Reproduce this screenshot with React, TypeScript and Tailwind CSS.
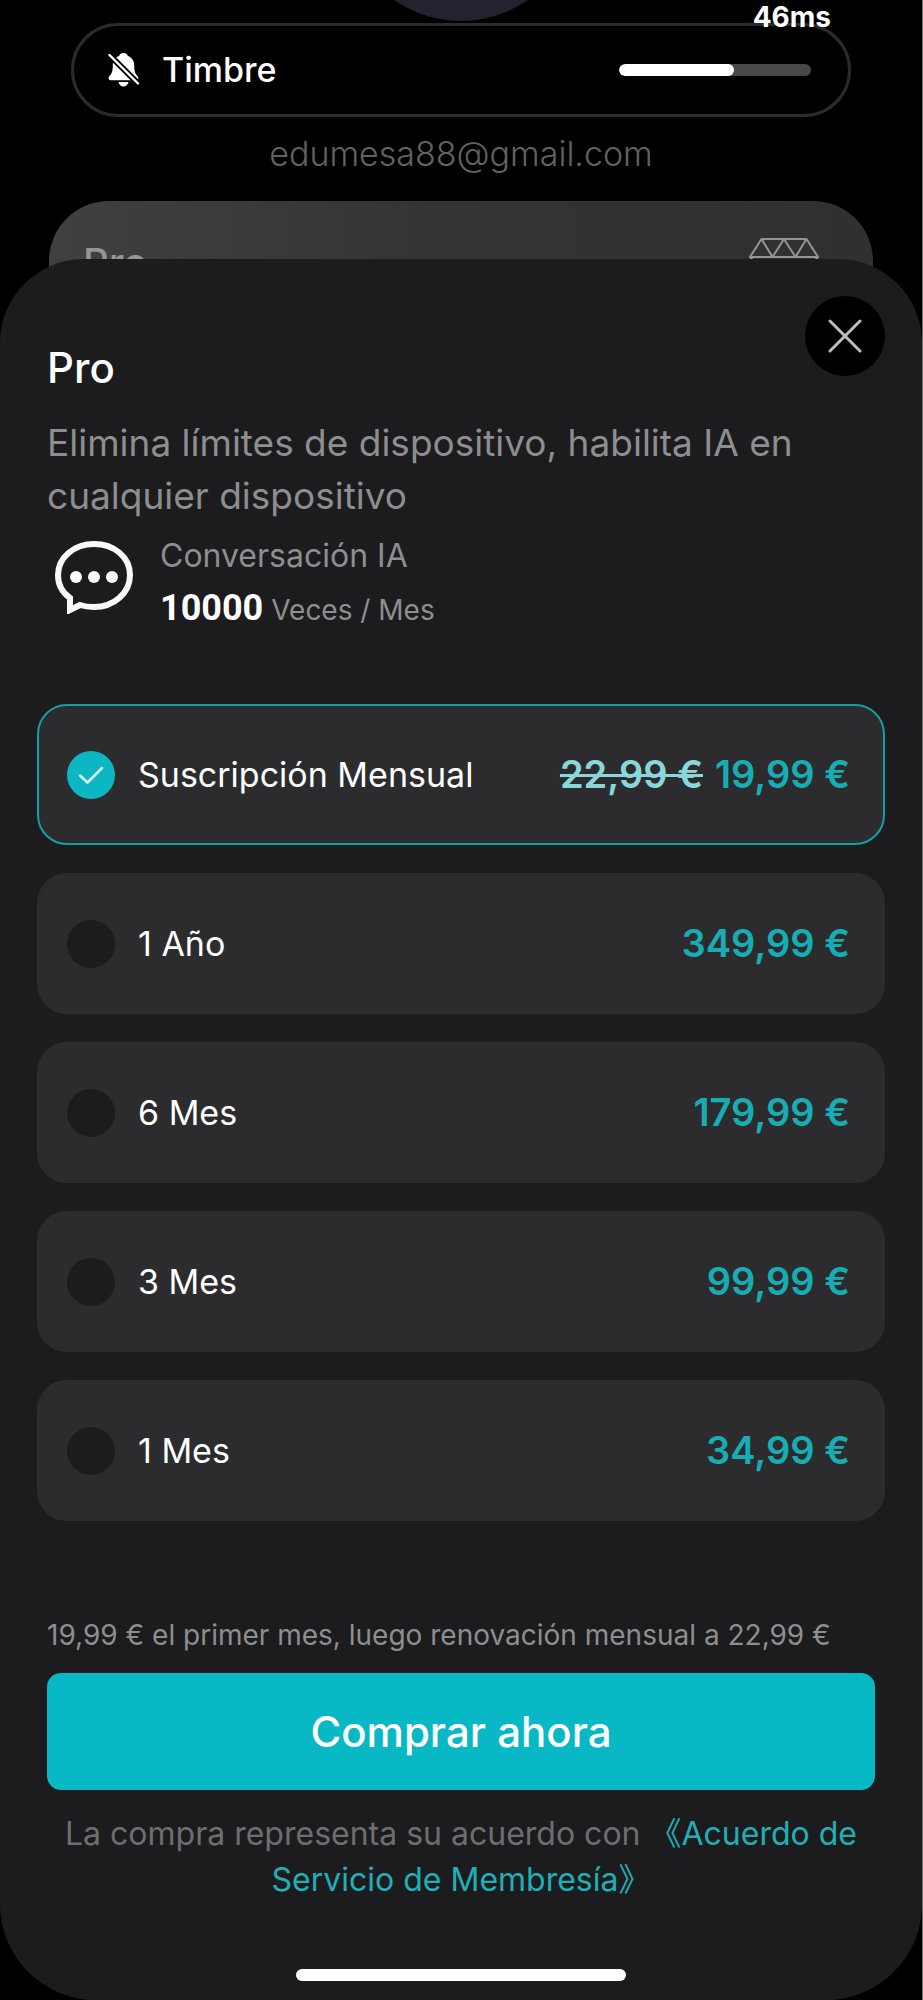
import { useState } from 'react'

const plans = [
  { id: 'subscription', name: 'Suscripción Mensual', oldPrice: '22,99 €', price: '19,99 €' },
  { id: 'year', name: '1 Año', price: '349,99 €' },
  { id: 'half-year', name: '6 Mes', price: '179,99 €' },
  { id: 'quarter', name: '3 Mes', price: '99,99 €' },
  { id: 'month', name: '1 Mes', price: '34,99 €' },
]

const BellOffIcon = () => (
  <svg width="32" height="36" viewBox="0 0 32 36" aria-hidden="true">
    <path
      d="M15.5 1c2.2 0 3.9 1.3 4.4 3.1 4 1.4 6.3 4.9 6.3 9.4 0 6.6 1.4 8.5 3.6 11 .9 1 .9 3.7-1.3 3.7H2.5c-2.2 0-2.2-2.7-1.3-3.7 2.2-2.5 3.6-4.4 3.6-11 0-4.5 2.3-8 6.3-9.4C11.6 2.3 13.3 1 15.5 1Z"
      fill="#fff"
    />
    <path d="M10.5 30h10c-.5 2.7-2.5 4.5-5 4.5s-4.5-1.8-5-4.5Z" fill="#fff" />
    <path d="M0 1.5 31 32.5" stroke="#000" strokeWidth="6" />
    <path d="M1.5 3 30 31.5" stroke="#fff" strokeWidth="2.4" strokeLinecap="round" />
  </svg>
)

const DiamondIcon = () => (
  <svg width="70" height="60" viewBox="0 0 70 60" fill="none" stroke="#949494" strokeWidth="2" strokeLinejoin="round" aria-hidden="true">
    <path d="M12.5 2h45L69 20 35 58 1 20Z" />
    <path d="M1 20h68M12.5 2 23.5 20 35 2l11.5 18L57.5 2" />
  </svg>
)

const ChatIcon = () => (
  <svg width="80" height="74" viewBox="0 0 80 74" aria-hidden="true">
    <path
      d="M40 4C20 4 4 17.5 4 35c0 10.5 5 18 12 23v12l10-5c4.500 1.500 9 2 14 2 20 0 36-14 36-32S60 4 40 4Z"
      fill="none"
      stroke="#f8f8f8"
      strokeWidth="6"
    />
    <circle cx="22" cy="37" r="6" fill="#f8f8f8" />
    <circle cx="40" cy="37" r="6" fill="#f8f8f8" />
    <circle cx="58" cy="37" r="6" fill="#f8f8f8" />
  </svg>
)

const RingerToast = () => (
  <div className="absolute inset-x-[71px] top-[23px] flex h-[94px] items-center rounded-full border-[3px] border-[#2b2b2b] bg-black pr-[37px] pl-[34px]">
    <BellOffIcon />
    <span className="ml-[22px] text-[34px] leading-[44px] font-medium text-white">Timbre</span>
    <progress
      value={60}
      max={100}
      aria-label="Timbre"
      className="ml-auto h-3 w-48 appearance-none overflow-hidden rounded-full [&::-webkit-progress-bar]:bg-[#484848] [&::-webkit-progress-value]:rounded-full [&::-webkit-progress-value]:bg-white"
    />
  </div>
)

const App = () => {
  const [selected, setSelected] = useState('subscription')

  return (
    <div className="flex min-h-screen flex-col overflow-hidden border-r border-[#6e6e6a] bg-black font-['Inter','Noto_Sans_CJK_SC',sans-serif]">
      {/* Profile behind the sheet */}
      <header className="relative px-[49px] pt-[132px]">
        <div className="absolute bottom-full left-1/2 size-[232px] -translate-x-1/2 translate-y-[21px] rounded-full bg-[#23232f]" />
        <RingerToast />
        <span className="absolute top-0 right-[91px] text-[28px] leading-[34px] font-bold text-white">46ms</span>
        <p className="text-center text-[34px] leading-[44px] font-light text-[#626262]">edumesa88@gmail.com</p>
        <div className="mt-[25px] flex h-[140px] items-start justify-between rounded-t-[60px] bg-linear-to-r from-[#404040] via-[#333333] to-[#303030] px-[34px] pt-[36px] pr-[54px]">
          <span className="text-[40px] leading-[52px] font-medium text-[#949494]">Pro</span>
          <DiamondIcon />
        </div>
      </header>

      {/* Purchase sheet */}
      <main className="relative -mt-[82px] flex grow flex-col rounded-t-[84px] rounded-b-[96px] bg-[#1c1c1e] px-[37px] pt-[37px] pb-[19px]">
        <div className="flex items-start justify-between pl-[10px]">
          <h1 className="pt-[46px] text-[42px] leading-[52px] font-medium text-white">Pro</h1>
          <button type="button" aria-label="Cerrar" className="grid size-20 place-items-center rounded-full bg-black">
            <svg width="34" height="34" viewBox="0 0 34 34" stroke="#bdbdbd" strokeWidth="3" strokeLinecap="round" aria-hidden="true">
              <path d="M2 2 32 32M32 2 2 32" />
            </svg>
          </button>
        </div>

        <p className="mt-[22px] px-[10px] text-[37px] leading-[53px] text-[#8e8e8f]">
          Elimina límites de dispositivo, habilita IA en cualquier dispositivo
        </p>

        <div className="mt-2 flex items-start pl-[17px]">
          <span className="pt-[10px]">
            <ChatIcon />
          </span>
          <div className="ml-[26px]">
            <p className="text-[32px] leading-[52px] text-[#8e8e8f]">Conversación IA</p>
            <p className="text-[28px] leading-[52px] text-[#8e8e8f]">
              <span className="font-[Roboto] text-[36px] font-bold text-white">10000</span> Veces / Mes
            </p>
          </div>
        </div>

        <fieldset aria-label="Plan" className="mt-[68px] flex flex-col gap-7">
          {plans.map((plan) => (
            <label
              key={plan.id}
              className="flex h-[141px] cursor-pointer items-center rounded-[30px] border-2 border-[#2c2c2e] bg-[#2c2c2e] pr-[33px] pl-7 has-checked:border-[#159ea6]"
            >
              <span className="grid place-items-center">
                <input
                  type="radio"
                  name="plan"
                  value={plan.id}
                  checked={selected === plan.id}
                  onChange={() => setSelected(plan.id)}
                  className="peer col-start-1 row-start-1 size-12 appearance-none rounded-full bg-[#1c1c1e] checked:bg-[#0cb7c3]"
                />
                <svg
                  width="26"
                  height="20"
                  viewBox="0 0 26 20"
                  className="pointer-events-none col-start-1 row-start-1 hidden peer-checked:block"
                  fill="none"
                  stroke="#d8fbfc"
                  strokeWidth="2.5"
                  strokeLinecap="round"
                  strokeLinejoin="round"
                  aria-hidden="true"
                >
                  <path d="M2 10.5 9.5 17.5 24 3" />
                </svg>
              </span>
              <span className="ml-[23px] text-[34px] text-white">{plan.name}</span>
              <span className="ml-auto flex gap-3 text-[38px] font-semibold text-[#17adb5]">
                {plan.oldPrice && <s className="text-[#8ad7db]">{plan.oldPrice}</s>}
                <span>{plan.price}</span>
              </span>
            </label>
          ))}
        </fieldset>

        <p className="mt-[96px] px-[10px] text-[28px] leading-[36px] text-[#8e8e8f]">
          19,99 € el primer mes, luego renovación mensual a 22,99 €
        </p>
        <button type="button" className="mx-[10px] mt-[20px] h-[117px] rounded-[14px] bg-[#08b8c4] text-[42px] font-medium text-white">
          Comprar ahora
        </button>
        <p className="mt-[21px] px-[10px] text-center text-[32px] leading-[46px] text-[#6e6e70]">
          La compra representa su acuerdo con{' '}
          <a href="#acuerdo" className="text-[#1fb0b6]">
            《Acuerdo de Servicio de Membresía》
          </a>
        </p>

        <div className="mx-auto mt-auto h-3 w-[330px] rounded-full bg-white" />
      </main>
    </div>
  )
}

export default App
